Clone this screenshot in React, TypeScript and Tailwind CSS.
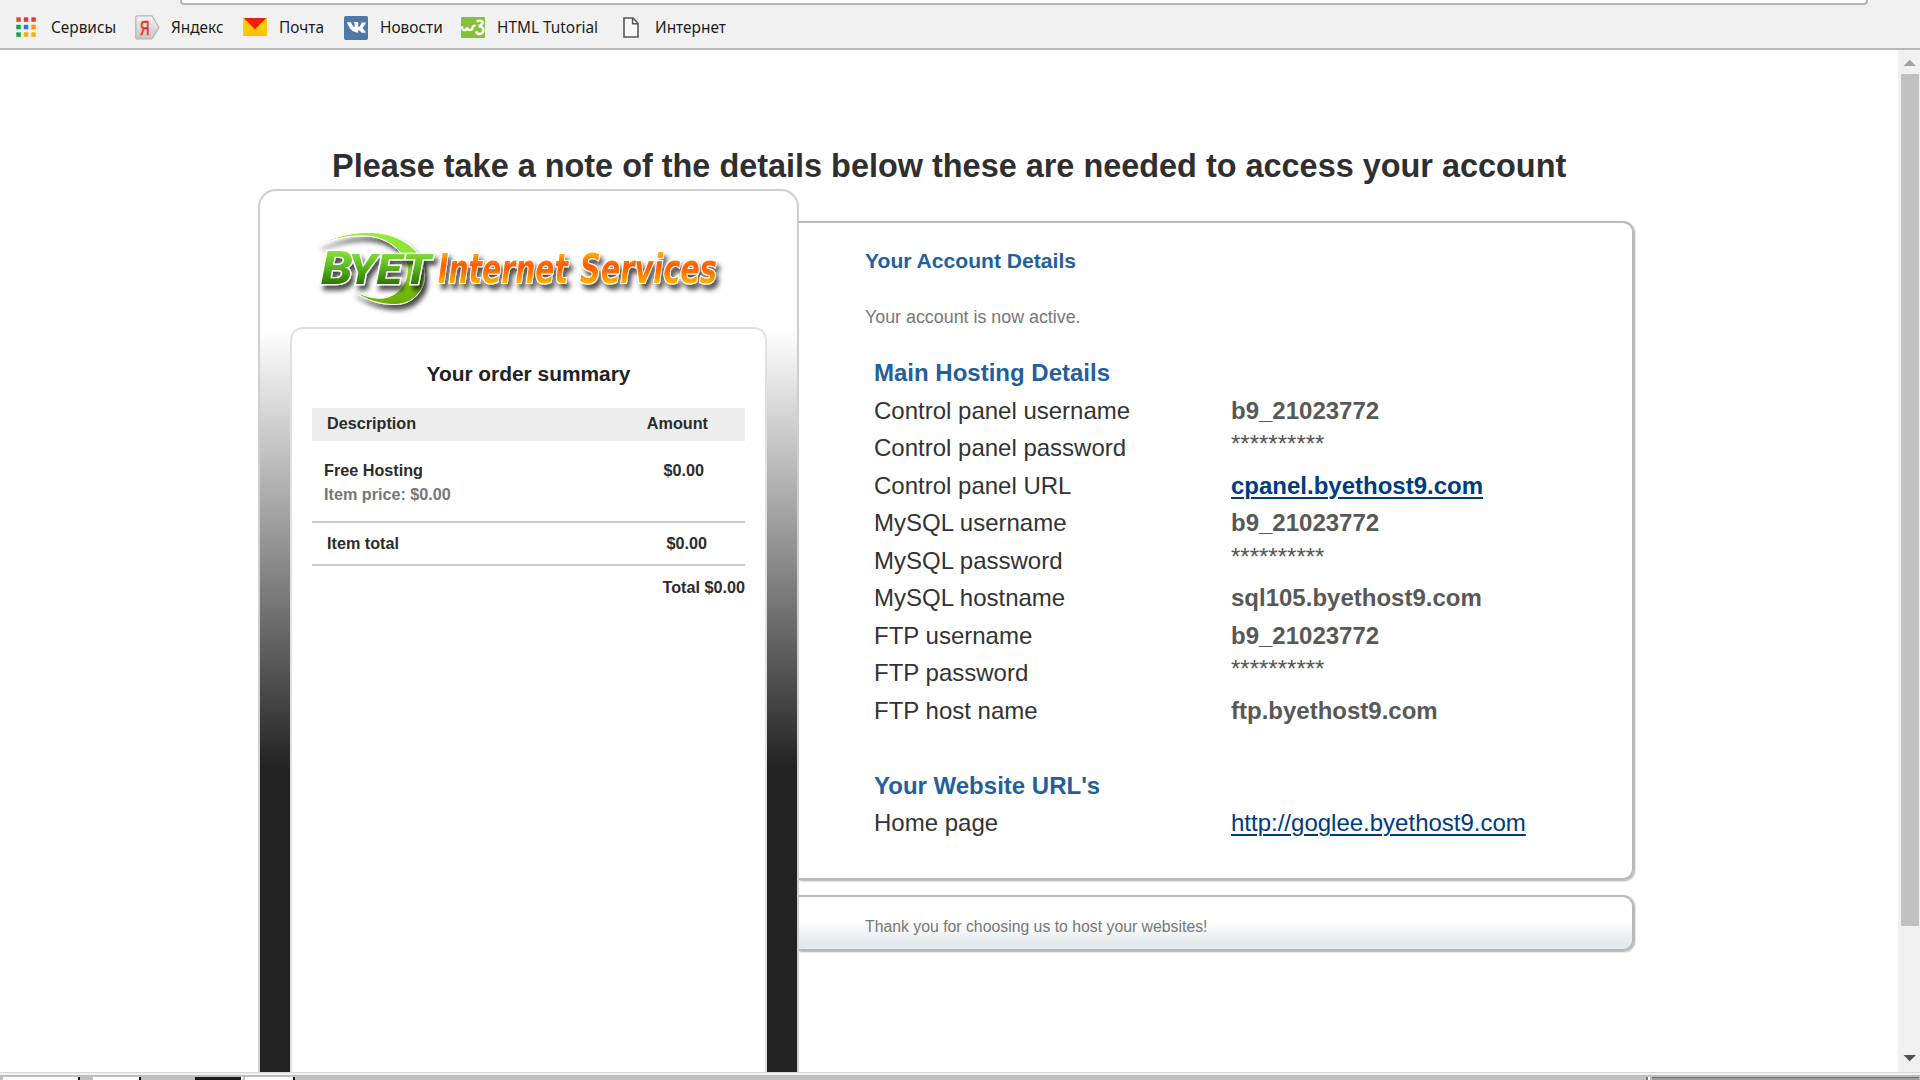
import type { ReactNode } from "react";

function AppsIcon() {
  const cells = ["#ea4335", "#e8382c", "#e8382c", "#1e9e4a", "#2b7de9", "#f59b0c", "#1e9e4a", "#f9ab06", "#f9ab06"];
  return (
    <svg width="20" height="20" viewBox="0 0 20 20">
      {cells.map((c, i) => (
        <rect key={i} x={(i % 3) * 7.5 + 0.3} y={Math.floor(i / 3) * 7.5 + 0.3} width="4.5" height="4.5" fill={c} />
      ))}
    </svg>
  );
}

function YandexIcon() {
  return (
    <svg width="25" height="25" viewBox="0 0 25 25">
      <defs>
        <linearGradient id="ya" x1="0" y1="0" x2="0" y2="1">
          <stop offset="0" stopColor="#f4f4f4" />
          <stop offset="1" stopColor="#c4c4c4" />
        </linearGradient>
      </defs>
      <path d="M2.5 .8H17L24 12.5 17 24H2.5Q.8 24 .8 22.3V2.5Q.8 .8 2.5 .8Z" fill="url(#ya)" stroke="#b4b4b4" strokeWidth="1.2" />
      <text x="5" y="19.5" fontFamily="Liberation Sans, sans-serif" fontSize="20" fill="#f02a20" stroke="#f02a20" strokeWidth=".6" textLength="9.5" lengthAdjust="spacingAndGlyphs">Я</text>
    </svg>
  );
}

function MailIcon() {
  return (
    <svg width="24" height="18" viewBox="0 0 24 18">
      <rect width="24" height="18" fill="#fc0" />
      <path d="M0 18L12 8l12 10z" fill="#f9c100" />
      <path d="M.6 0h22.8L12 11.2z" fill="#f01d0c" />
    </svg>
  );
}

function VkIcon() {
  return (
    <svg width="24" height="24" viewBox="0 0 24 24">
      <rect width="24" height="24" rx="2" fill="#5078a5" />
      <path
        d="M12.6 16.7h1s.3 0 .4-.2c.2-.2.1-.5.1-.5s0-1.5.7-1.7c.7-.2 1.5 1.5 2.5 2.1.7.5 1.2.4 1.2.4h2.4s1.3-.1.7-1.1c0-.1-.4-.8-1.9-2.2-1.6-1.5-1.4-1.2.5-3.8 1.2-1.5 1.6-2.5 1.5-2.9-.1-.4-.9-.3-.9-.3h-2.8s-.2 0-.3.1c-.2.1-.2.3-.2.3s-.5 1.2-1 2.1c-1.2 2.1-1.7 2.2-1.9 2-.5-.3-.4-1.2-.4-1.9 0-2 .3-2.9-.6-3.1-.3-.1-.5-.1-1.3-.1-1 0-1.8 0-2.3.2-.3.2-.6.5-.4.6.2 0 .6.1.8.4.3.4.3 1.2.3 1.2s.2 2.4-.4 2.7c-.4.2-1-.2-2.1-2.2-.6-1-1-2.1-1-2.1s-.1-.2-.2-.3c-.2-.1-.5-.2-.5-.2H3.7s-.4 0-.5.2c-.2.1 0 .5 0 .5s2 4.8 4.4 7.2c2.1 2.3 5 2.1 5 2.1z"
        fill="#fff"
      />
    </svg>
  );
}

function W3Icon() {
  return (
    <svg width="24" height="21" viewBox="0 0 24 21">
      <rect width="24" height="21" rx="1" fill="#84c03c" />
      <path d="M.5 9.2q.8 4 3 4t2.6-2.7q.5 2.7 2.8 2.7t2.8-3.2q.8-2 3-1" fill="none" stroke="#fff" strokeWidth="2.2" />
      <path d="M15.500 4.300q5-1.600 6 .7t-3.800 4.200q5 .2 4.600 4.200-.6 3.800-4 3.600-2.600-.3-3.200-2.600" fill="none" stroke="#fff" strokeWidth="2.5" />
    </svg>
  );
}

function PageIcon() {
  return (
    <svg width="16" height="21" viewBox="0 0 16 21">
      <path d="M1 1h9l5 5.300V20H1z" fill="#f8f8f8" stroke="#575757" strokeWidth="1.6" />
      <path d="M9.600 1v5.700H15" fill="none" stroke="#575757" strokeWidth="1.5" />
    </svg>
  );
}

function Bookmark({ icon, label, iconClass, width }: { icon: ReactNode; label: string; iconClass: string; width: string }) {
  return (
    <div className={`flex shrink-0 items-center ${width}`}>
      <span className={`shrink-0 ${iconClass}`}>{icon}</span>
      <span className="whitespace-nowrap">{label}</span>
    </div>
  );
}

function Logo() {
  return (
    <svg width="537" height="136" viewBox="260 191 537 136" fontStyle="italic">
      <defs>
        <linearGradient id="swoosh" x1="0" y1="0" x2="0" y2="1">
          <stop offset="0" stopColor="#97ea35" />
          <stop offset="0.45" stopColor="#8ade30" />
          <stop offset="1" stopColor="#6cab00" />
        </linearGradient>
        <linearGradient id="green" gradientUnits="userSpaceOnUse" x1="0" y1="250" x2="0" y2="284">
          <stop offset="0" stopColor="#8ae53a" />
          <stop offset="0.5" stopColor="#5cb622" />
          <stop offset="1" stopColor="#2c7800" />
        </linearGradient>
        <linearGradient id="orange" gradientUnits="userSpaceOnUse" x1="0" y1="253" x2="0" y2="283">
          <stop offset="0" stopColor="#ffb000" />
          <stop offset="0.4" stopColor="#ff5c00" />
          <stop offset="0.6" stopColor="#ff6a00" />
          <stop offset="1" stopColor="#ffb400" />
        </linearGradient>
        <filter id="shadow" x="-10%" y="-20%" width="125%" height="160%">
          <feDropShadow dx="3" dy="5" stdDeviation="2.4" floodColor="#000" floodOpacity="0.7" />
        </filter>
      </defs>
      <g filter="url(#shadow)">
        <path
          d="M318 245C338 235 355 232 372 232.500C386 233 396 237 403 241C414 247 420 255 423 264C426 274 425 286 418 294C412 301 405 304 396 304.500C380 305 364 299 353 291C366 297 376 299 384 298C396 296 403 288 406 279C409 270 407 262 403 256C396 246 386 239 372 236.500C354 234 336 238 318 245Z"
          fill="url(#swoosh)" stroke="#fff" strokeWidth="1"
        />
      </g>
      <g filter="url(#shadow)" stroke="#fff" strokeWidth="2.5" paintOrder="stroke" fill="url(#green)" fontFamily="Roboto, 'Liberation Sans', sans-serif" fontWeight="800">
        <text x="321" y="284" fontSize="47" textLength="32" lengthAdjust="spacingAndGlyphs">B</text>
        <text x="348" y="284" fontSize="42" textLength="83" lengthAdjust="spacingAndGlyphs">YET</text>
      </g>
      <g filter="url(#shadow)" stroke="#fff" strokeWidth="2" paintOrder="stroke" fill="url(#orange)" fontFamily="'DejaVu Sans Condensed', 'DejaVu Sans', sans-serif" fontWeight="700">
        <text x="438" y="283" fontSize="41.500" textLength="130" lengthAdjust="spacingAndGlyphs">Internet</text>
        <text x="580" y="283" fontSize="41.500" textLength="137" lengthAdjust="spacingAndGlyphs">Services</text>
      </g>
    </svg>
  );
}

type Row = { label: string; value?: ReactNode; heading?: boolean };
const bold = "font-bold text-[#585858]";
const link = "text-[#003b80] underline decoration-[1.5px] underline-offset-[3px]";
const masked = <span className="block leading-[29px] text-[#555]">**********</span>;
const rows: Row[] = [
  { label: "Main Hosting Details", heading: true },
  { label: "Control panel username", value: <span className={bold}>b9_21023772</span> },
  { label: "Control panel password", value: masked },
  { label: "Control panel URL", value: <a className={`font-bold ${link}`}>cpanel.byethost9.com</a> },
  { label: "MySQL username", value: <span className={bold}>b9_21023772</span> },
  { label: "MySQL password", value: masked },
  { label: "MySQL hostname", value: <span className={bold}>sql105.byethost9.com</span> },
  { label: "FTP username", value: <span className={bold}>b9_21023772</span> },
  { label: "FTP password", value: masked },
  { label: "FTP host name", value: <span className={bold}>ftp.byethost9.com</span> },
  { label: "" },
  { label: "Your Website URL's", heading: true },
  { label: "Home page", value: <a className={link}>http://goglee.byethost9.com</a> },
];

function OrderSummary() {
  return (
    <div className="mx-[30px] h-[745px] rounded-t-[13px] border-2 border-b-0 border-[#e0e0e0] bg-white px-[20px] pt-[30px] text-[16.2px] font-bold text-[#2c2c2c]">
      <h2 className="text-center text-[20.9px] leading-[30px] text-[#222]">Your order summary</h2>
      <div className="mt-[19px] flex h-[33px] justify-between bg-[#ededed] pr-[37px] pl-[15px] leading-[31px]">
        <span>Description</span>
        <span>Amount</span>
      </div>
      <div className="mt-[17px] flex h-[63px] justify-between pr-[41px] pl-[12px] leading-[24px]">
        <div>
          <div>Free Hosting</div>
          <div className="text-[#777]">Item price: $0.00</div>
        </div>
        <span>$0.00</span>
      </div>
      <div className="flex h-[45px] justify-between border-y-2 border-[#ccc] pr-[38px] pl-[15px] leading-[41px]">
        <span>Item total</span>
        <span>$0.00</span>
      </div>
      <div className="text-right leading-[42px]">Total $0.00</div>
    </div>
  );
}

const panel = "border-2 border-l-0 border-[#b9b9b9] shadow-[1px_1px_2px_rgba(0,0,0,0.35)]";

export default function App() {
  return (
    <div className="flex h-[1080px] w-[1920px] flex-col overflow-hidden bg-white font-['Liberation_Sans',Arial,sans-serif]">
      <div className="h-[50px] shrink-0 border-b-2 border-[#b9b9b9] bg-[#f1f1f1]">
        <div className="ml-[180px] h-[5px] w-[1688px] rounded-b-[4px] border-2 border-t-0 border-[#b4b4b4] bg-white" />
        <div className="flex h-[43px] items-center pt-[2px] pl-[16px] font-['Noto_Sans',sans-serif] text-[15.4px] text-[#1c1c1c]">
          <Bookmark icon={<AppsIcon />} label="Сервисы" iconClass="mr-[15px]" width="w-[119px]" />
          <Bookmark icon={<YandexIcon />} label="Яндекс" iconClass="mr-[11px]" width="w-[108px]" />
          <Bookmark icon={<MailIcon />} label="Почта" iconClass="mr-[12px]" width="w-[101px]" />
          <Bookmark icon={<VkIcon />} label="Новости" iconClass="mr-[12px]" width="w-[117px]" />
          <Bookmark icon={<W3Icon />} label="HTML Tutorial" iconClass="mr-[12px] tracking-[0.1px]" width="w-[162px]" />
          <Bookmark icon={<PageIcon />} label="Интернет" iconClass="mr-[16px]" width="w-[110px]" />
        </div>
      </div>

      <div className="flex h-[1022px] shrink-0 overflow-hidden">
        <main className="w-[1898px] pt-[97px]">
          <h1 className="pl-[332px] text-[32.43px] leading-[38px] font-bold whitespace-nowrap text-[#2f2f2f]">
            Please take a note of the details below these are needed to access your account
          </h1>
          <div className="flex pt-[4px] pl-[258px]">
            <aside className="h-[883px] w-[541px] shrink-0 rounded-t-[18px] border-2 border-b-0 border-[#cfcfcf] bg-[linear-gradient(to_bottom,#fff_139px,#222_579px)]">
              <div className="h-[136px]">
                <Logo />
              </div>
              <OrderSummary />
            </aside>
            <div className="w-[835px] pt-[32px]">
              <section className={`h-[659px] rounded-r-[11px] pt-[23px] pl-[66px] ${panel}`}>
                <h2 className="text-[21.1px] leading-[30px] font-bold text-[#245f9d]">Your Account Details</h2>
                <p className="mt-[29px] text-[17.85px] leading-[24px] text-[#777]">Your account is now active.</p>
                <div className="mt-[25px] pl-[9px] text-[24px] leading-[37.5px] text-[#333]">
                  {rows.map((r, i) => (
                    <div key={i} className="flex h-[37.5px]">
                      <span className={r.heading ? "w-[357px] font-bold text-[#245f9d]" : "w-[357px]"}>{r.label}</span>
                      <span>{r.value}</span>
                    </div>
                  ))}
                </div>
              </section>
              <footer className={`mt-[15px] h-[56px] rounded-r-[11px] bg-[linear-gradient(to_bottom,#fff_24px,#e6eaed_46px)] pl-[66px] text-[15.8px] leading-[60px] text-[#777] ${panel}`}>
                Thank you for choosing us to host your websites!
              </footer>
            </div>
          </div>
        </main>
        <div className="flex w-[22px] flex-col items-end bg-[#f1f1f1] pr-px">
          <svg width="22" height="24" viewBox="0 0 22 24" className="-mr-px shrink-0">
            <path d="M5.500 16l6.200-6.200L18 16z" fill="#a3a3a3" />
          </svg>
          <div className="h-[852px] w-[18px] bg-[#c1c1c1]" />
          <svg width="22" height="24" viewBox="0 0 22 24" className="mt-auto -mr-px mb-[3px] shrink-0">
            <path d="M5.500 10l6.200 6.200L18 10z" fill="#505050" />
          </svg>
        </div>
      </div>

      <div className="flex h-[8px] shrink-0 flex-col bg-[#bfbfbf]">
        <div className="h-[3px] border-t border-[#d8d8d8] bg-[#f2f2f2]" />
        <div className="mt-[2px] flex h-[3px] pl-[3px]">
          <div className="w-[77px] border-r-2 border-[#111] bg-white" />
          <div className="ml-[13px] w-[48px] border-r-2 border-[#111] bg-white" />
          <div className="ml-[54px] w-[48px] border-r-2 border-white bg-[#1a1a1a]" />
          <div className="ml-[2px] w-[50px] border-r-2 border-[#111] bg-white" />
          <div className="ml-[1351px] w-[4px] border-l-2 border-[#777] bg-white" />
          <div className="ml-[2px] w-[267px] border-t border-[#6f6f6f] bg-[#9c9c9c]" />
        </div>
      </div>
    </div>
  );
}
